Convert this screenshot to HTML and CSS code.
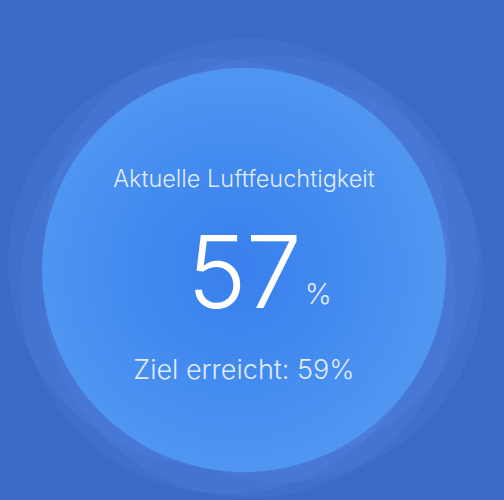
FILE: index.html
```html
<!DOCTYPE html>
<html lang="de">
<head>
<meta charset="utf-8">
<title>Luftfeuchtigkeit</title>
<link rel="stylesheet" href="styles.css">
</head>
<body>
<main class="stage">
  <div class="orb">
    <span class="ripple r1"></span>
    <span class="ripple r2"></span>
    <span class="ripple r3"></span>
    <span class="ripple r4"></span>
    <span class="ripple r5"></span>
    <span class="ripple r6"></span>
    <section class="core">
      <p class="label">Aktuelle Luftfeuchtigkeit</p>
      <div class="value"><span class="num">57</span><span class="unit">%</span></div>
      <p class="target">Ziel erreicht: 59%</p>
    </section>
  </div>
</main>
</body>
</html>
```
FILE: styles.css
```css
html, body {
  margin: 0;
  padding: 0;
  background: #3a69c6;
}
body {
  font-family: Inter, "Noto Sans", "Liberation Sans", sans-serif;
  overflow: hidden;
}
.stage {
  width: 504px;
  height: 500px;
  box-sizing: border-box;
  padding: 40px 16px 0 0;
  display: flex;
  align-items: center;
  justify-content: center;
}
.orb {
  position: relative;
  width: 404px;
  height: 404px;
}
.ripple {
  position: absolute;
  border-radius: 50%;
  background: rgba(110, 160, 250, 0.12);
}
.r1 { left: 3px; top: -30px; width: 404px; height: 404px; }
.r2 { left: -34px; top: -10px; width: 408px; height: 408px; }
.r3 { left: 38px; top: 10px; width: 404px; height: 404px; }
.r4 { left: 3px; top: 20px; width: 410px; height: 410px; }
.r5 { left: -22px; top: 14px; width: 412px; height: 412px; }
.r6 { left: 31px; top: -12px; width: 404px; height: 404px; }
.core {
  position: relative;
  width: 404px;
  height: 404px;
  border-radius: 50%;
  background: radial-gradient(circle at 48% 50%, #3a7fee 0%, #428aef 35%, #5096f1 70%, #5b9ff4 100%);
  display: flex;
  flex-direction: column;
  align-items: center;
  color: #fff;
  box-sizing: border-box;
  padding-top: 96px;
}
.core p { margin: 0; }
.label {
  font-size: 23.5px;
  font-weight: 300;
  color: rgba(236, 243, 255, 0.94);
  line-height: 30px;
}
.value {
  align-self: stretch;
  display: grid;
  grid-template-columns: 1fr auto 1fr;
  align-items: end;
  margin-top: 28px;
}
.num {
  grid-column: 2;
  font-size: 100px;
  line-height: 100px;
  font-weight: 300;
  letter-spacing: -1px;
}
.unit {
  grid-column: 3;
  justify-self: start;
  font-size: 29px;
  line-height: 29px;
  font-weight: 300;
  margin: 0 0 14px 4px;
  color: rgba(236, 243, 255, 0.94);
}
.target {
  margin-top: 31px !important;
  font-size: 27px;
  font-weight: 300;
  color: rgba(236, 243, 255, 0.94);
  line-height: 34px;
}
```
